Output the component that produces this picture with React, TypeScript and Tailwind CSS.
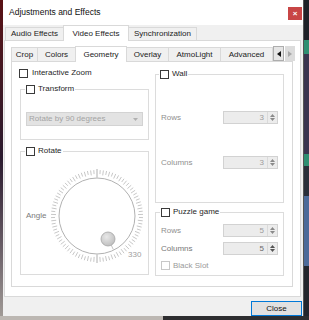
import React from 'react'

const ui = "font-['Liberation_Sans',Arial,sans-serif]"

function Check({ disabled = false }: { disabled?: boolean }) {
  return (
    <span
      className={`block w-[9px] h-[9px] shrink-0 border bg-white ${
        disabled ? 'border-[#c8c8c8]' : 'border-[#3a3a3a]'
      }`}
    />
  )
}

function Group({
  title,
  className,
  legendClass,
  children
}: {
  title: string
  className: string
  legendClass: string
  children?: React.ReactNode
}) {
  return (
    <fieldset className={`border border-[#dcdcdc] ${className}`}>
      <legend className={`flex items-center gap-[3px] h-[10px] px-[1px] ${legendClass}`}>
        <Check />
        <span className="text-[8px] leading-[10px] text-[#262626]">{title}</span>
      </legend>
      {children}
    </fieldset>
  )
}

function Spin({ value, dark = false }: { value: string; dark?: boolean }) {
  const arrow = dark ? '#555' : '#8a8a8a'
  return (
    <div className="flex h-[13px] w-[55px] border border-[#d2d2d2] bg-[#ececec]">
      <span
        className={`flex-1 text-right pr-[3px] text-[8px] leading-[11px] ${
          dark ? 'text-[#6a6a6a]' : 'text-[#9c9c9c]'
        }`}
      >
        {value}
      </span>
      <span className="w-[10px] flex flex-col items-center justify-center gap-[1px] border-l border-[#dadada]">
        <svg width="5" height="3" viewBox="0 0 5 3">
          <path d="M0 3 L2.5 0 L5 3 Z" fill={arrow} />
        </svg>
        <svg width="5" height="3" viewBox="0 0 5 3">
          <path d="M0 0 L5 0 L2.5 3 Z" fill={arrow} />
        </svg>
      </span>
    </div>
  )
}

function Dial() {
  const ticks = Array.from({ length: 90 }, (_, i) => {
    const a = (i * 4 * Math.PI) / 180
    const major = i % 45 === 0
    const r1 = major ? 38.5 : i % 2 === 0 ? 41 : 42
    const r2 = major ? 47 : 46
    return (
      <line
        key={i}
        x1={50 + r1 * Math.sin(a)}
        y1={50 - r1 * Math.cos(a)}
        x2={50 + r2 * Math.sin(a)}
        y2={50 - r2 * Math.cos(a)}
        stroke={major ? '#9a9a9a' : '#b9b9b9'}
        strokeWidth={0.8}
      />
    )
  })
  return (
    <div className="relative w-[100px] h-[100px]">
      <svg width="100" height="100" viewBox="0 0 100 100">
        <defs>
          <radialGradient id="knob" cx="40%" cy="35%" r="70%">
            <stop offset="0%" stopColor="#e8e8e8" />
            <stop offset="100%" stopColor="#bdbdbd" />
          </radialGradient>
        </defs>
        {ticks}
        <circle cx="50" cy="50" r="38" fill="#fff" stroke="#a8a8a8" strokeWidth="0.9" />
        <line x1="64.2" y1="79" x2="66.3" y2="83.5" stroke="#c4c4c4" strokeWidth="1" />
        <circle cx="61" cy="73" r="7" fill="url(#knob)" stroke="#a5a5a5" strokeWidth="0.8" />
      </svg>
      <span className="absolute left-[81px] top-[84px] text-[8px] leading-[9px] text-[#a0a0a0]">330</span>
    </div>
  )
}

function OuterTab({ label, w, selected = false }: { label: string; w: string; selected?: boolean }) {
  return (
    <div
      className={`${w} -ml-px first:ml-0 flex items-center justify-center border border-b-0 border-[#d9d9d9] text-[8px] text-[#222] ${
        selected ? 'relative z-10 h-[16px] -mb-px bg-white' : 'h-[13px] bg-[#f0f0f0]'
      }`}
    >
      {label}
    </div>
  )
}

function InnerTab({ label, w, selected = false }: { label: string; w: string; selected?: boolean }) {
  return (
    <div
      className={`${w} -ml-px first:ml-0 flex items-center justify-center border border-b-0 border-[#d9d9d9] text-[8px] text-[#222] ${
        selected ? 'relative z-10 h-[16px] -mb-px bg-white' : 'h-[14px] bg-[#f0f0f0]'
      }`}
    >
      {label}
    </div>
  )
}

function Window() {
  return (
    <div className={`w-[300px] h-[316px] flex flex-col bg-[#f0f0f0] ${ui}`}>
      <div className="h-[25px] bg-white flex items-center justify-between pl-[6px] pr-px">
        <span className="text-[8.5px] text-[#111]">Adjustments and Effects</span>
        <span className="w-[14px] h-[13px] mt-[2px] bg-[#c84646] flex items-center justify-center text-white text-[8px] leading-none font-bold">
          ×
        </span>
      </div>

      <div className="h-[15px] flex items-end pl-[2px]">
        <OuterTab label="Audio Effects" w="w-[59px]" />
        <OuterTab label="Video Effects" w="w-[66px]" selected />
        <OuterTab label="Synchronization" w="w-[69px]" />
      </div>

      <div className="ml-px w-[297px] h-[257px] bg-white border border-[#d9d9d9] pt-[5px] pl-[6px]">
        <div className="h-[15px] flex items-end">
          <InnerTab label="Crop" w="w-[27px]" />
          <InnerTab label="Colors" w="w-[39px]" />
          <InnerTab label="Geometry" w="w-[52px]" selected />
          <InnerTab label="Overlay" w="w-[43px]" />
          <InnerTab label="AtmoLight" w="w-[53px]" />
          <InnerTab label="Advanced" w="w-[53px]" />
          <div className="w-[11px] h-[15px] ml-0 flex items-center justify-center border border-[#adadad] bg-[#e5e5e5]">
            <svg width="4" height="6" viewBox="0 0 4 6">
              <path d="M4 0 L0 3 L4 6 Z" fill="#111" />
            </svg>
          </div>
          <div className="w-[10px] h-[15px] ml-px flex items-center justify-center bg-[#dcdcdc]">
            <svg width="4" height="6" viewBox="0 0 4 6">
              <path d="M0 0 L4 3 L0 6 Z" fill="#a8a8a8" />
            </svg>
          </div>
        </div>

        <div className="w-[282px] h-[226px] border border-[#d9d9d9] bg-white flex gap-[5px] pl-[7px] pt-[6px]">
          <div className="w-[131px] flex flex-col">
            <div className="h-[10px] flex items-center gap-[4px]">
              <Check />
              <span className="text-[8px] leading-[10px] text-[#262626]">Interactive Zoom</span>
            </div>

            <Group title="Transform" className="mt-[6px] ml-px w-[129px] h-[56px]" legendClass="ml-[4px]">
              <div className="mt-[18px] mx-[5px] h-[14px] bg-[#e3e3e3] border border-[#d3d3d3] flex items-center justify-between pl-[2px] pr-[4px]">
                <span className="text-[8px] text-[#a3a3a3]">Rotate by 90 degrees</span>
                <svg width="5" height="3" viewBox="0 0 5 3">
                  <path d="M0 0 L5 0 L2.5 3 Z" fill="#b0b0b0" />
                </svg>
              </div>
            </Group>

            <Group title="Rotate" className="mt-[6px] ml-px w-[129px] h-[129px]" legendClass="ml-[4px]">
              <div className="mt-[10px] pl-[5px] flex items-center">
                <span className="w-[21px] text-[8px] text-[#7a7a7a]">Angle</span>
                <Dial />
              </div>
            </Group>
          </div>

          <div className="w-[129px] mt-px flex flex-col">
            <Group title="Wall" className="w-[129px] h-[134px]" legendClass="ml-[3px]">
              <div className="mt-[32px] px-[5px] flex items-center justify-between">
                <span className="text-[8px] text-[#8f8f8f]">Rows</span>
                <Spin value="3" />
              </div>
              <div className="mt-[32px] px-[5px] flex items-center justify-between">
                <span className="text-[8px] text-[#8f8f8f]">Columns</span>
                <Spin value="3" />
              </div>
            </Group>

            <Group title="Puzzle game" className="mt-[4px] w-[129px] h-[69px]" legendClass="ml-[4px]">
              <div className="mt-[7px] px-[5px] flex items-center justify-between">
                <span className="text-[8px] text-[#8f8f8f]">Rows</span>
                <Spin value="5" />
              </div>
              <div className="mt-[5px] px-[5px] flex items-center justify-between">
                <span className="text-[8px] text-[#777]">Columns</span>
                <Spin value="5" dark />
              </div>
              <div className="mt-[6px] pl-[5px] flex items-center gap-[3px]">
                <Check disabled />
                <span className="text-[8px] leading-[9px] text-[#9a9a9a]">Black Slot</span>
              </div>
            </Group>
          </div>
        </div>
      </div>

      <div className="mt-[4px] mr-px self-end w-[51px] h-[15px] border border-[#0078d7] bg-[#e1e1e1] flex items-center justify-center text-[8px] text-[#111]">
        Close
      </div>
    </div>
  )
}

export default function App() {
  return (
    <div className="w-[309px] h-[320px] flex flex-col overflow-hidden bg-[#2b2b33]">
      <div className="flex h-[316px]">
        <div className="w-[3px] bg-gradient-to-b from-[#5a1014] via-[#2a1a2e] to-[#a09a96]" />
        <Window />
        <div className="flex-1 flex flex-col bg-[#262a33] border-l border-[#555]">
          <div className="h-[40px] bg-[#1f2228]" />
          <div className="h-[14px] bg-[#2f8f72]" />
          <div className="h-[100px] bg-[#3a3550]" />
          <div className="h-[12px] bg-[#2f8f72]" />
          <div className="h-[30px] bg-[#2a2f3a]" />
          <div className="h-[70px] bg-[#4d6b9a]" />
          <div className="flex-1 bg-[#23262d]" />
        </div>
      </div>
      <div className="h-[4px] flex">
        <div className="w-[163px] bg-[#bcb7b2]" />
        <div className="flex-1 bg-[#2e2e30]" />
      </div>
    </div>
  )
}
